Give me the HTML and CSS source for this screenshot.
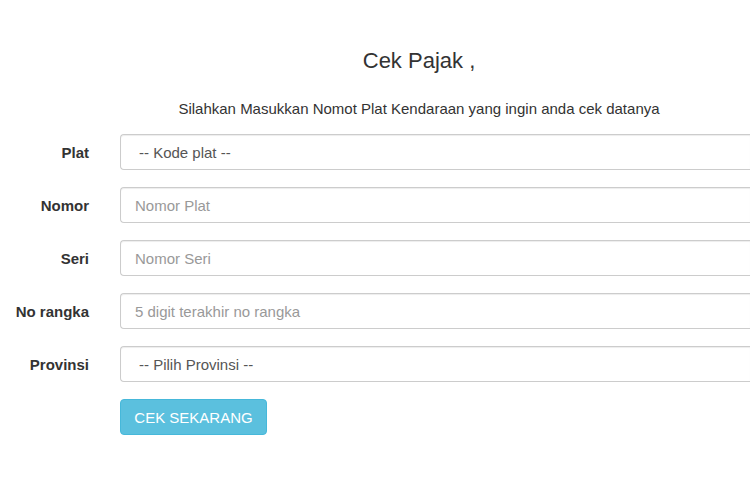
FILE: index.html
```html
<!DOCTYPE html>
<html lang="id">
<head>
<meta charset="utf-8">
<title>Cek Pajak</title>
<link rel="stylesheet" href="styles.css">
</head>
<body>
<main class="page">
  <h1 class="title">Cek Pajak ,</h1>
  <p class="subtitle">Silahkan Masukkan Nomot Plat Kendaraan yang ingin anda cek datanya</p>
  <form class="form">
    <label class="label" for="plat">Plat</label>
    <select class="control select" id="plat"><option>-- Kode plat --</option></select>

    <label class="label" for="nomor">Nomor</label>
    <input class="control" id="nomor" type="text" placeholder="Nomor Plat">

    <label class="label" for="seri">Seri</label>
    <input class="control" id="seri" type="text" placeholder="Nomor Seri">

    <label class="label" for="rangka">No rangka</label>
    <input class="control" id="rangka" type="text" placeholder="5 digit terakhir no rangka">

    <label class="label" for="prov">Provinsi</label>
    <select class="control select" id="prov"><option>-- Pilih Provinsi --</option></select>

    <span class="spacer"></span>
    <div class="actions"><button class="btn" type="button">CEK SEKARANG</button></div>
  </form>
</main>
</body>
</html>
```
FILE: styles.css
```css
html, body {
  margin: 0;
  padding: 0;
  background: #fff;
  overflow: hidden;
}
body {
  font-family: "Liberation Sans", Arial, sans-serif;
  color: #333;
  width: 750px;
  height: 500px;
}
.page {
  padding-top: 47px;
}
.title {
  margin: 0;
  font-size: 22px;
  font-weight: normal;
  text-align: center;
  padding-left: 88px;
  line-height: 28px;
  color: #333;
}
.subtitle {
  margin: 24px 0 0;
  font-size: 15px;
  line-height: 20px;
  text-align: center;
  padding-left: 88px;
  color: #333;
}
.form {
  margin-top: 15px;
  display: grid;
  grid-template-columns: 89px 630px;
  column-gap: 31px;
  row-gap: 17px;
  align-items: center;
}
.label {
  text-align: right;
  font-weight: bold;
  font-size: 15px;
  color: #333;
}
.control {
  box-sizing: border-box;
  height: 36px;
  width: 630px;
  border: 1px solid #ccc;
  border-right: 0;
  border-radius: 4px 0 0 4px;
  box-shadow: inset 0 1px 1px rgba(0,0,0,0.075);
  padding: 0 14px;
  font-family: "Liberation Sans", Arial, sans-serif;
  font-size: 15px;
  color: #555;
  background: #fff;
  outline: none;
}
.control::placeholder {
  color: #999;
}
.select {
  appearance: none;
  -webkit-appearance: none;
  padding-left: 18px;
}
.btn {
  box-sizing: border-box;
  height: 36px;
  width: 147px;
  background: #5bc0de;
  border: 1px solid #46b8da;
  border-radius: 4px;
  color: #fff;
  font-family: "Liberation Sans", Arial, sans-serif;
  font-size: 15px;
  padding: 0;
  cursor: pointer;
}
```
